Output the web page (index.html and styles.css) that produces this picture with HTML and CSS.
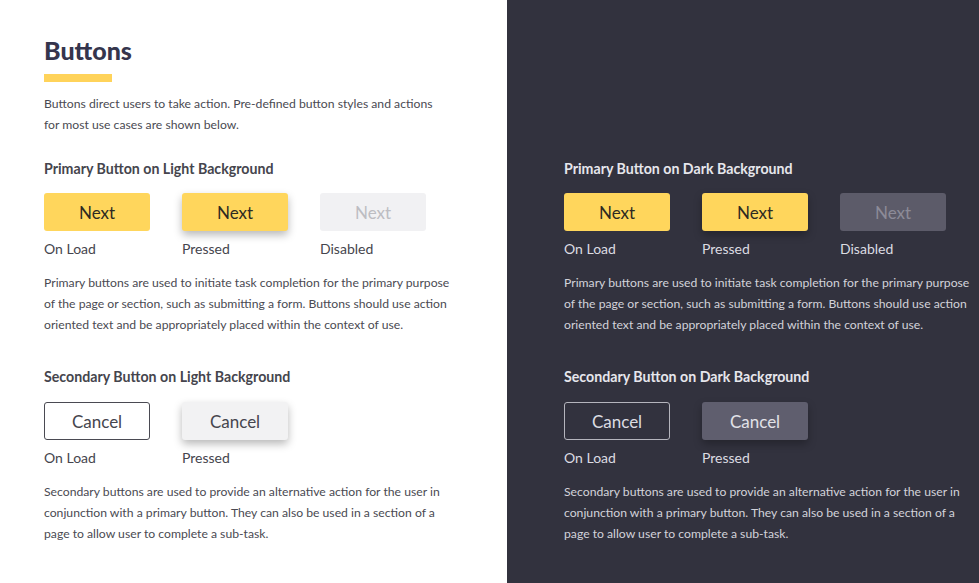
FILE: index.html
```html
<!DOCTYPE html>
<html lang="en">
<head>
<meta charset="utf-8">
<title>Buttons</title>
<link rel="stylesheet" href="styles.css">
</head>
<body>
<div class="page">
  <section class="panel panel-light">
    <h1 class="title">Buttons</h1>
    <div class="title-bar"></div>
    <p class="intro">Buttons direct users to take action. Pre-defined button styles and actions<br>for most use cases are shown below.</p>

    <h2 class="heading">Primary Button on Light Background</h2>
    <div class="btn-row">
      <div class="btn-item"><button class="btn btn-primary">Next</button><span class="label">On Load</span></div>
      <div class="btn-item"><button class="btn btn-primary pressed">Next</button><span class="label">Pressed</span></div>
      <div class="btn-item"><button class="btn btn-disabled">Next</button><span class="label">Disabled</span></div>
    </div>
    <p class="desc">Primary buttons are used to initiate task completion for the primary purpose<br>of the page or section, such as submitting a form. Buttons should use action<br>oriented text and be appropriately placed within the context of use.</p>

    <h2 class="heading heading-second">Secondary Button on Light Background</h2>
    <div class="btn-row">
      <div class="btn-item"><button class="btn btn-secondary">Cancel</button><span class="label">On Load</span></div>
      <div class="btn-item"><button class="btn btn-secondary-pressed pressed">Cancel</button><span class="label">Pressed</span></div>
    </div>
    <p class="desc">Secondary buttons are used to provide an alternative action for the user in<br>conjunction with a primary button. They can also be used in a section of a<br>page to allow user to complete a sub-task.</p>
  </section>

  <section class="panel panel-dark">
    <h2 class="heading">Primary Button on Dark Background</h2>
    <div class="btn-row">
      <div class="btn-item"><button class="btn btn-primary">Next</button><span class="label">On Load</span></div>
      <div class="btn-item"><button class="btn btn-primary pressed">Next</button><span class="label">Pressed</span></div>
      <div class="btn-item"><button class="btn btn-disabled">Next</button><span class="label">Disabled</span></div>
    </div>
    <p class="desc">Primary buttons are used to initiate task completion for the primary purpose<br>of the page or section, such as submitting a form. Buttons should use action<br>oriented text and be appropriately placed within the context of use.</p>

    <h2 class="heading heading-second">Secondary Button on Dark Background</h2>
    <div class="btn-row">
      <div class="btn-item"><button class="btn btn-secondary">Cancel</button><span class="label">On Load</span></div>
      <div class="btn-item"><button class="btn btn-secondary-pressed pressed">Cancel</button><span class="label">Pressed</span></div>
    </div>
    <p class="desc">Secondary buttons are used to provide an alternative action for the user in<br>conjunction with a primary button. They can also be used in a section of a<br>page to allow user to complete a sub-task.</p>
  </section>
</div>
</body>
</html>
```
FILE: styles.css
```css
* { box-sizing: border-box; }
html, body { margin: 0; padding: 0; }
body {
  font-family: Lato, "Liberation Sans", sans-serif;
  width: 979px;
  height: 583px;
  overflow: hidden;
}
.page {
  display: flex;
  height: 583px;
}
.panel {
  display: flex;
  flex-direction: column;
  align-items: flex-start;
  white-space: nowrap;
}
.panel-light {
  width: 507px;
  background: #ffffff;
  padding: 35px 0 0 44px;
  color: #45454f;
}
.panel-dark {
  flex: 1;
  background: #32323e;
  padding: 157.5px 0 0 57px;
  color: #e4e4ea;
}
.title {
  margin: 0;
  font-size: 25px;
  line-height: 30px;
  font-weight: 900;
  color: #35354d;
}
.title-bar {
  width: 68px;
  height: 8px;
  background: #ffd35a;
  margin-top: 9px;
}
.intro {
  margin: 10.5px 0 0;
  font-size: 12.2px;
  line-height: 21px;
  color: #4a4a52;
}
.heading {
  margin: 0;
  font-size: 14.2px;
  line-height: 21px;
  font-weight: 700;
}
.panel-light .intro + .heading { margin-top: 23px; }
.panel-light .heading { color: #45454d; }
.panel-dark .heading { color: #e6e6ec; }
.heading-second { margin-top: 31px; }
.btn-row {
  display: flex;
  gap: 32px;
  margin-top: 14.5px;
}
.heading-second + .btn-row { margin-top: 15.5px; }
.btn-item {
  display: flex;
  flex-direction: column;
  width: 106px;
}
.btn {
  width: 106px;
  height: 38px;
  border: none;
  border-radius: 3px;
  font-family: inherit;
  font-size: 17px;
  padding: 0;
  cursor: pointer;
}
.btn-primary {
  background: #ffd65c;
  color: #2e2a22;
}
.btn.pressed {
  box-shadow: 0 4px 9px rgba(0, 0, 0, 0.28);
}
.btn-disabled {
  background: #f1f1f3;
  color: #bdbdc2;
}
.panel-dark .btn-disabled {
  background: #5c5b69;
  color: #8c8b98;
}
.btn-secondary {
  background: #ffffff;
  border: 1px solid #4a4a52;
  color: #45454d;
}
.panel-dark .btn-secondary {
  background: transparent;
  border: 1px solid #b5b5bd;
  color: #dcdce2;
}
.btn-secondary-pressed {
  background: #f2f2f3;
  color: #45454d;
}
.panel-dark .btn-secondary-pressed {
  background: #5f5e6e;
  color: #e2e2e8;
}
.label {
  margin-top: 6.5px;
  font-size: 14px;
  line-height: 21px;
}
.panel-light .label { color: #45454d; }
.panel-dark .label { color: #dcdce2; }
.desc {
  margin: 13px 0 0;
  font-size: 12.2px;
  line-height: 21px;
}
.panel-light .desc { color: #4a4a52; }
.panel-dark .desc { color: #d2d2da; }
```
